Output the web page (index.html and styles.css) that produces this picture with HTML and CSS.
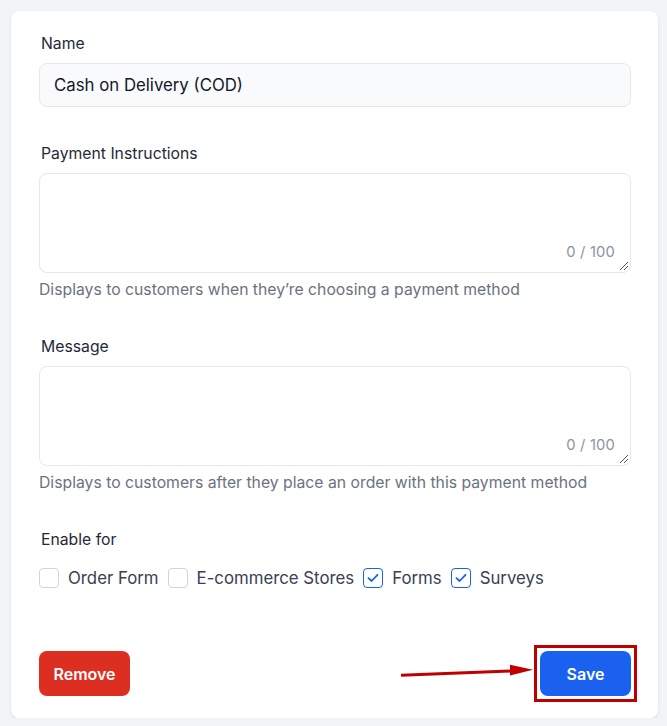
FILE: index.html
```html
<!DOCTYPE html>
<html>
<head>
<meta charset="utf-8">
<link rel="stylesheet" href="styles.css">
</head>
<body>
<div class="card">
  <div class="field">
    <label class="label">Name</label>
    <div class="input">Cash on Delivery (COD)</div>
  </div>
  <div class="field gap-lg">
    <label class="label">Payment Instructions</label>
    <div class="textarea"><span class="counter">0 / 100</span><span class="grip"></span></div>
    <div class="help">Displays to customers when they’re choosing a payment method</div>
  </div>
  <div class="field gap-lg">
    <label class="label">Message</label>
    <div class="textarea"><span class="counter">0 / 100</span><span class="grip"></span></div>
    <div class="help">Displays to customers after they place an order with this payment method</div>
  </div>
  <div class="field gap-lg">
    <label class="label">Enable for</label>
    <div class="checks">
      <span class="check"><span class="box"></span>Order Form</span>
      <span class="check"><span class="box"></span>E-commerce Stores</span>
      <span class="check"><span class="box on"><svg width="14" height="14" viewBox="0 0 14 14"><path d="M2.5 7.2 L5.6 10 L11.5 3.8" fill="none" stroke="#1a61f0" stroke-width="1.8" stroke-linecap="round" stroke-linejoin="round"/></svg></span>Forms</span>
      <span class="check"><span class="box on"><svg width="14" height="14" viewBox="0 0 14 14"><path d="M2.5 7.2 L5.6 10 L11.5 3.8" fill="none" stroke="#1a61f0" stroke-width="1.8" stroke-linecap="round" stroke-linejoin="round"/></svg></span>Surveys</span>
    </div>
  </div>
  <div class="actions">
    <button class="btn remove">Remove</button>
    <div class="save-wrap">
      <svg class="arrow" width="132" height="20" viewBox="0 0 132 20"><path d="M0 11.2 L116 6.8" stroke="#c00000" stroke-width="3" fill="none"/><path d="M109 0.8 L132 5.8 L109 11.5 Z" fill="#c00000"/></svg>
      <div class="highlight"><button class="btn save">Save</button></div>
    </div>
  </div>
</div>
</body>
</html>
```
FILE: styles.css
```css
* { box-sizing: border-box; }
body {
  margin: 0;
  background: #f1f5f8;
  font-family: Inter, "Noto Sans", sans-serif;
  color: #1f2937;
}
.card {
  margin: 11px 0 0 11px;
  width: 647px;
  height: 707px;
  background: #fff;
  border-radius: 8px;
  box-shadow: 0 1px 3px rgba(15, 23, 42, 0.12);
  padding: 23px 27px 22px 28px;
  display: flex;
  flex-direction: column;
}
.field { display: flex; flex-direction: column; }
.gap-lg { margin-top: 37px; }
.label {
  font-size: 15.75px;
  font-weight: 400;
  line-height: 20px;
  color: #1f2937;
  padding-left: 2px;
  margin-bottom: 9px;
}
.input {
  height: 44px;
  border: 1px solid #e5e7eb;
  border-radius: 8px;
  background: #f9fafb;
  font-size: 16.8px;
  color: #111827;
  padding: 0 14px;
  display: flex;
  align-items: center;
}
.textarea {
  position: relative;
  height: 100px;
  border: 1px solid #e5e7eb;
  border-radius: 8px;
  background: #fff;
}
.counter {
  position: absolute;
  right: 15px;
  bottom: 11px;
  font-size: 14.7px;
  color: #8a94a3;
  letter-spacing: 0.2px;
}
.grip {
  position: absolute;
  right: 2px;
  bottom: 2px;
  width: 8px;
  height: 8px;
  background: linear-gradient(135deg, transparent 45%, #555 45%, #555 55%, transparent 55%, transparent 70%, #555 70%, #555 80%, transparent 80%);
}
.help {
  margin-top: 7px;
  font-size: 15.75px;
  line-height: 20px;
  color: #6b7280;
}
.checks {
  display: flex;
  align-items: center;
  gap: 9px;
  margin-top: 9px;
  font-size: 16.8px;
  color: #374151;
}
.check { display: flex; align-items: center; gap: 9px; }
.box {
  width: 20px;
  height: 20px;
  border: 1px solid #d1d5db;
  border-radius: 4px;
  background: #fff;
  display: flex;
  align-items: center;
  justify-content: center;
}
.box.on { border-color: #1a61f0; }
.actions {
  margin-top: auto;
  display: flex;
  justify-content: space-between;
  align-items: center;
}
.btn {
  width: 91px;
  height: 45px;
  border: none;
  border-radius: 8px;
  font-family: Inter, "Noto Sans", sans-serif;
  font-size: 16px;
  font-weight: 600;
  color: #fff;
}
.remove { background: #dc2f22; }
.save { background: #1a61f0; display: block; }
.save-wrap { display: flex; align-items: center; }
.arrow { margin-right: 7px; }
.highlight {
  border: 3px solid #c00000;
  padding: 3px;
  margin: -6px;
}
```
